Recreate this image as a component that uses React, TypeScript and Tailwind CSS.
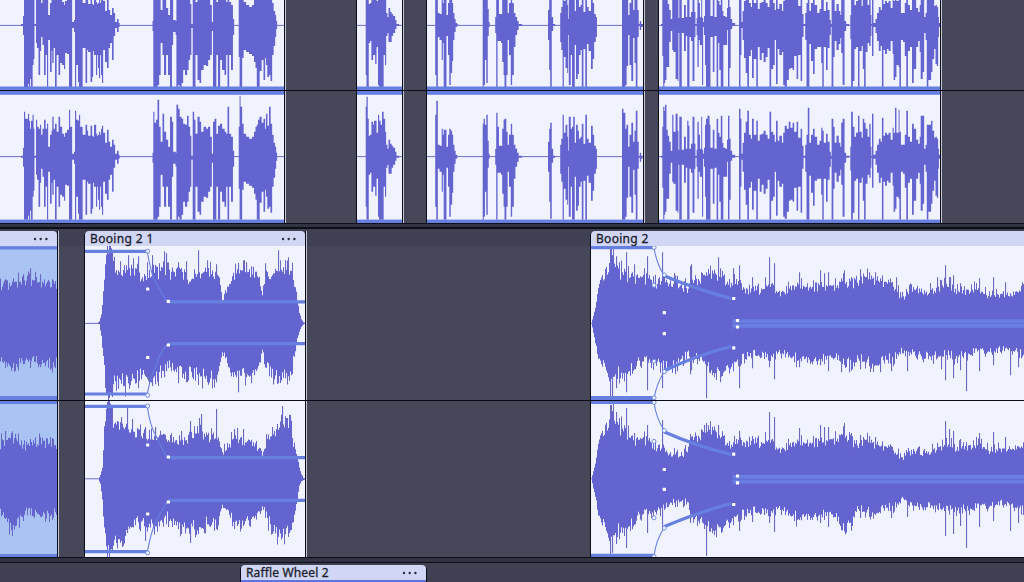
import React from 'react';

type Peak = [number, number, number];

// Peaks are [x, up, down]; in speech clips each value holds until the next x
const speechA: Peak[] = [
  [21, 1, 1], [23, 9, 10], [24, 45, 63], [25, 38, 63], [28, 43, 59], [29, 36, 63], [30, 28, 54], [31, 36, 63], [32.5, 42, 40], [33.5, 28, 34], [34.3, 1, 1],
  [36, 37, 18], [37, 30, 23], [38.5, 28, 50], [40, 32, 26], [41, 22, 12], [42.5, 28, 20], [44, 37, 50], [45.5, 28, 30], [47, 33, 63], [48, 10, 15], [50, 22, 47],
  [51.5, 26, 26], [52.3, 40, 38], [53.5, 28, 23], [55, 33, 63], [56.5, 25, 30], [58.5, 40, 50], [60, 30, 38], [62, 23, 40], [64, 20, 44], [65, 24, 28], [67, 27, 29],
  [69, 47, 63], [70, 30, 63], [72, 3, 3], [74, 5, 7], [75, 46, 63], [76, 37, 40], [78, 36, 57], [79, 42, 63], [80, 30, 63], [82.5, 22, 23], [85.5, 32, 58],
  [87, 26, 25], [88, 21, 27], [90.5, 31, 57], [92, 21, 52], [93, 20, 26], [94, 32, 30], [96, 23, 50], [97, 21, 30], [98, 22, 43], [99, 25, 53], [100, 22, 30], [101, 28, 50], [102, 31, 58], [103, 24, 25],
  [105, 14, 37], [107, 27, 43], [108.5, 15, 23], [110, 10, 18], [112, 17, 35], [113.5, 12, 11], [115, 3, 3], [117, 6, 7], [118.5, 2, 2], [119.5, 0, 0],
  [152.5, 4, 6], [153.3, 45, 63], [154.3, 34, 63], [156, 37, 63], [157.5, 57, 60], [159, 30, 50], [160.5, 15, 18], [162.5, 43, 30], [164, 25, 50], [166, 17, 30],
  [168, 10, 50], [170, 40, 63], [171.8, 35, 20], [173, 5, 7], [175.6, 4, 10], [176.4, 52, 63], [178, 48, 60], [179.5, 40, 63], [181.5, 38, 58], [183, 33, 45],
  [185, 32, 50], [187, 41, 45], [188.5, 30, 35], [190, 21, 30], [191.2, 1, 3], [192.7, 45, 63], [194, 37, 63], [195.3, 23, 30], [197.5, 40, 55], [199.5, 35, 58],
  [201, 25, 45], [203.5, 30, 40], [206, 28, 41], [208, 30, 35], [210, 20, 30], [211.7, 3, 6], [213, 35, 63], [214.5, 38, 63], [216.2, 23, 30], [218, 31, 63],
  [220, 33, 35], [222, 28, 45], [224.5, 25, 50], [226, 23, 30], [227.5, 50, 63], [229, 23, 30], [231, 20, 45], [232.8, 6, 10], [234, 0, 0],
  [238.7, 30, 32], [239.6, 61, 63], [240.4, 50, 63], [242, 33, 33], [243.5, 23, 25], [246, 20, 27], [249, 18, 29], [252, 20, 31], [254, 25, 37], [255.5, 30, 43],
  [256.8, 32, 63], [258, 37, 63], [259.5, 40, 46], [261.5, 34, 35], [263.5, 38, 55], [265, 28, 33], [266, 43, 40], [267.3, 31, 52], [269, 50, 50], [270.5, 33, 56],
  [272, 22, 30], [273.5, 14, 21], [275, 10, 12], [276, 4, 4], [277, 0, 0],
];

const speechB: Peak[] = [
  [365.7, 50, 50], [366.5, 60, 63], [367.6, 38, 63], [368.6, 21, 18], [370, 22, 16], [371.4, 35, 35], [373, 32, 30], [374, 36, 30], [375.2, 36, 39], [376.4, 24, 22],
  [378, 42, 60], [379, 36, 63], [380.5, 32, 63], [382, 45, 63], [383.5, 38, 30], [385, 25, 40], [386, 12, 11], [387.3, 8, 8], [388.5, 17, 17], [390, 13, 17],
  [391.5, 11, 11], [393, 9, 8], [395, 5, 4], [396.3, 1, 1], [399, 0, 0],
];

const speechC: Peak[] = [
  [435.2, 42, 50], [436.3, 56, 63], [437.7, 12, 12], [439.5, 11, 15], [441.7, 28, 35], [442.7, 22, 18], [443.7, 27, 63], [446.3, 10, 11], [448, 22, 30], [449.3, 28, 60],
  [450.6, 26, 48], [452, 22, 36], [453, 12, 15], [454.3, 6, 7], [455.5, 2, 2], [457, 1, 0], [458, 0, 0], [482.7, 33, 63], [483.6, 38, 60], [484.8, 32, 35],
  [486.3, 42, 58], [487.6, 16, 11], [488.6, 3, 2], [489.5, 0, 0], [495.2, 8, 8], [496.2, 44, 63], [497.4, 30, 16], [498.8, 11, 16], [501, 11, 18], [502.2, 28, 37],
  [503.6, 37, 50], [504.5, 38, 63], [506.2, 25, 50], [507.5, 12, 15], [509, 22, 30], [510.8, 33, 60], [512, 22, 50], [513.7, 12, 22], [515.3, 8, 10], [517, 4, 5],
  [518.5, 1, 1], [522, 0, 0], [548, 15, 15], [549.2, 28, 45], [550.2, 34, 62], [551.6, 8, 6], [553, 1, 1], [555, 0, 0], [560.2, 12, 17], [561.3, 18, 25],
  [562.6, 42, 63], [563.7, 24, 32], [565.5, 32, 43], [567.2, 20, 48], [568, 6, 10], [568.8, 40, 60], [570.6, 28, 30], [572, 30, 63], [573.2, 40, 63], [574.6, 14, 20],
  [576, 32, 54], [577.6, 26, 49], [578.8, 18, 30], [580.5, 20, 25], [581.8, 33, 63], [583.3, 13, 24], [585.3, 42, 63], [586.8, 18, 19], [588.5, 14, 26], [591, 31, 44],
  [592.6, 22, 34], [594, 11, 17], [595.7, 8, 12], [596.8, 0, 0], [622, 48, 63], [623.3, 44, 63], [625.2, 28, 60], [626.5, 32, 41], [628, 10, 10], [629.5, 22, 40],
  [631.3, 34, 56], [633, 15, 13], [634.5, 26, 38], [635.8, 46, 63], [637.3, 15, 12], [638.6, 1, 1], [639.8, 4, 5], [641, 1, 2], [642.5, 1, 0], [643, 0, 0],
];

const speechD: Peak[] = [
  [661, 1, 1], [662.3, 30, 31], [663.2, 50, 63], [664.2, 46, 58], [665, 52, 55], [666.3, 27, 42], [667.6, 21, 42], [669, 15, 17], [670.6, 6, 6],
  [672.2, 42, 25], [673.3, 25, 27], [675.6, 43, 54], [677.5, 26, 56], [678.3, 7, 8], [679.3, 40, 63], [681.6, 7, 8], [684, 20, 26], [685.7, 8, 11], [687.2, 36, 63],
  [688.3, 31, 63], [689.3, 8, 12], [691, 13, 16], [692.5, 40, 56], [694.3, 13, 12], [695.3, 1, 1], [696.6, 7, 10], [697.4, 35, 42], [698.6, 22, 15], [699.8, 8, 20],
  [701.2, 40, 20], [702, 7, 60], [703, 3, 2], [704, 9, 10], [705, 32, 40], [706, 38, 63], [707.5, 41, 63], [709.4, 32, 63], [710.3, 9, 12], [712.8, 27, 47],
  [714.3, 8, 11], [716.6, 38, 63], [718, 24, 18], [719.3, 20, 45], [720.8, 41, 63], [722.2, 14, 63], [723.2, 9, 20], [725.3, 8, 20], [727, 17, 5], [728, 41, 63],
  [729.3, 18, 43], [730.5, 6, 4], [732, 2, 1], [735, 0, 0], [739, 48, 63], [740.3, 38, 30], [741.3, 3, 3],
  [742.6, 14, 15], [744, 24, 33], [745.7, 35, 48], [747.3, 46, 63], [748.8, 22, 31], [750.7, 18, 25], [752, 38, 53], [753.6, 22, 34], [756.3, 36, 63], [757.7, 16, 22],
  [759.7, 22, 35], [761.5, 23, 28], [763.6, 26, 37], [765.5, 22, 32], [767.5, 18, 23], [769.5, 45, 63], [771, 25, 44], [773, 22, 40], [774.6, 15, 15], [776, 36, 59],
  [777.5, 16, 24], [779.3, 21, 30], [781.8, 14, 27], [783.2, 24, 60], [784.7, 31, 62], [786.7, 28, 55], [788.7, 35, 44], [790.3, 29, 43], [792.6, 34, 45],
  [794, 25, 31], [796.6, 35, 54], [798, 19, 30], [800.6, 28, 56], [802, 11, 12], [803.4, 1, 1], [805.2, 12, 15], [806.5, 22, 63], [807.8, 49, 63], [809.2, 14, 19],
  [811, 22, 36], [813, 28, 49], [814.5, 20, 24], [817, 12, 22], [819.5, 16, 22], [821.2, 29, 38], [822.3, 26, 63], [823.6, 14, 22], [826, 23, 45], [827.5, 15, 23],
  [829.5, 5, 10], [830.7, 1, 2], [831.6, 38, 63], [833.2, 30, 32], [834.5, 14, 16], [836.5, 21, 25], [838.6, 14, 19], [840.2, 10, 13], [841.2, 34, 28], [842.6, 38, 60],
  [844.4, 4, 6], [846, 1, 1], [849, 0, 0], [850.3, 10, 14], [851.1, 45, 63], [852.7, 30, 56], [854.3, 20, 24], [856, 24, 22], [858, 41, 63], [859.3, 25, 26],
  [861.5, 19, 21], [862.8, 38, 44], [864.1, 34, 63], [865.5, 28, 27], [867.4, 20, 18], [869.3, 33, 21], [870.5, 10, 11], [871.3, 1, 1], [872, 43, 31], [873.3, 2, 2],
  [875.5, 6, 8], [877, 12, 16], [878.8, 18, 26], [880.5, 15, 21], [881.9, 39, 63], [883.3, 21, 25], [885, 24, 29], [886.8, 22, 24], [888.5, 24, 26], [890.5, 17, 16],
  [892.6, 29, 29], [893.6, 24, 55], [895, 49, 52], [896.3, 24, 40], [898.6, 47, 42], [899.4, 25, 63], [900.8, 12, 15], [903, 12, 17], [904.8, 22, 31], [906.3, 46, 63],
  [907.8, 20, 26], [909.8, 15, 22], [912, 33, 58], [913.6, 28, 44], [916, 17, 22], [918, 13, 16], [919.7, 20, 27], [920.7, 41, 54], [922.6, 41, 47], [924, 8, 8],
  [925.6, 12, 15], [926.8, 32, 63], [928.2, 32, 55], [931, 36, 47], [932.3, 26, 34], [934, 19, 24], [935.5, 20, 39], [936.8, 18, 41], [938, 8, 12], [938.8, 2, 2], [940, 1, 1],
];

// Crowd clips: interpolated body outline plus individual spikes
const crowdLeft1: Peak[] = [[0, 33, 30], [7, 35, 35], [11, 36, 41], [20, 38, 36], [30, 38, 34], [40, 37, 35], [57, 37, 36]];
const crowdLeft2: Peak[] = [[0, 32, 31], [5, 36, 34], [12, 38, 44], [17, 37, 42], [25, 30, 30], [35, 34, 31], [57, 32, 31]];

const booingA1: Peak[] = [
  [97, 0, 0], [99, 2, 1], [101, 9, 12], [103, 28, 30], [105, 52, 50], [107, 68, 65], [111, 63, 66], [114, 52, 54], [119, 45, 54], [128, 48, 53], [134, 50, 53], [140, 44, 46],
  [148, 44, 46], [152, 50, 54], [158, 47, 46], [163, 50, 40], [170, 46, 38], [180, 46, 43], [190, 41, 46], [200, 47, 47], [212, 44, 49], [218, 42, 48],
  [222, 23, 30], [226, 30, 29], [230, 42, 42], [236, 49, 47], [244, 46, 47], [252, 48, 48], [258, 42, 38], [262, 25, 25], [266, 46, 40], [275, 46, 48],
  [284, 52, 49], [291, 49, 45], [296, 28, 19], [299, 10, 8], [301, 4, 3], [303, 1, 1], [305, 0, 0],
];
const booingA2: Peak[] = [
  [98, 0, 0], [100, 4, 5], [102, 12, 18], [104, 42, 46], [107, 68, 66], [111, 67, 68], [114, 48, 54], [120, 46, 56], [128, 44, 48], [134, 44, 36], [140, 39, 41],
  [150, 41, 43], [155, 38, 44], [164, 36, 33], [172, 34, 35], [182, 36, 43], [192, 39, 44], [200, 44, 44], [208, 36, 38], [217, 37, 42],
  [221, 25, 26], [226, 27, 29], [232, 37, 37], [243, 36, 39], [252, 34, 37], [258, 29, 30], [262, 24, 24], [268, 34, 38], [274, 44, 49],
  [282, 50, 47], [290, 55, 47], [293, 34, 36], [297, 21, 19], [299, 11, 6], [301, 5, 2], [303, 1, 1], [305, 0, 0],
];
const booingB1: Peak[] = [
  [591, 0, 0], [593, 7, 9], [595, 14, 18], [597, 26, 27], [600, 36, 35], [605, 44, 40], [608, 54, 44], [611, 62, 48], [616, 57, 46], [620, 46, 45], [626, 42, 44],
  [633, 41, 40], [640, 40, 33], [650, 39, 33], [657, 37, 34], [665, 41, 40], [672, 37, 40], [680, 36, 34], [687, 31, 29], [693, 38, 29], [702, 43, 34], [711, 45, 42],
  [724, 41, 42], [733, 37, 38], [739, 34, 33], [746, 31, 29], [757, 30, 28], [768, 34, 32], [778, 28, 29], [787, 30, 27], [800, 35, 34], [811, 33, 34],
  [822, 34, 32], [832, 33, 29], [842, 38, 34], [851, 38, 38], [856, 37, 32], [866, 40, 34], [874, 40, 37], [886, 37, 33], [895, 31, 30], [903, 23, 23],
  [911, 32, 27], [923, 28, 31], [935, 31, 29], [946, 35, 28], [957, 29, 31], [970, 31, 27], [982, 28, 24], [991, 24, 26], [1001, 26, 23], [1010, 24, 24], [1024, 31, 29],
];
const booingB2: Peak[] = [
  [591, 0, 0], [593, 7, 9], [595, 14, 16], [597, 26, 27], [600, 36, 37], [605, 44, 44], [608, 54, 48], [611, 60, 50], [616, 56, 49], [620, 46, 44], [626, 41, 43],
  [633, 34, 40], [640, 35, 31], [650, 33, 29], [657, 29, 28], [665, 27, 26], [671, 23, 21], [680, 22, 21], [686, 25, 21], [690, 35, 29], [700, 41, 39], [711, 45, 44],
  [722, 38, 42], [731, 32, 38], [740, 32, 32], [746, 34, 30], [757, 33, 29], [768, 34, 32], [778, 27, 29], [787, 29, 29], [800, 34, 37], [811, 33, 34],
  [822, 34, 32], [832, 35, 30], [842, 40, 43], [850, 40, 45], [855, 30, 27], [866, 34, 29], [874, 32, 30], [886, 29, 26], [895, 24, 24], [903, 20, 18],
  [911, 26, 23], [923, 23, 25], [935, 27, 24], [946, 31, 28], [957, 28, 27], [970, 31, 27], [982, 29, 24], [991, 25, 24], [1001, 27, 21], [1010, 26, 24], [1024, 29, 29],
];

const spikesLeft1: Peak[] = [[5, 44, 30], [23, 49, 41], [30, 55, 43], [40, 49, 44], [52, 44, 45]];
const spikesLeft2: Peak[] = [[5, 48, 40], [11, 46, 51], [15, 45, 47], [39, 43, 36], [50, 42, 37]];
const spikesA1: Peak[] = [
  [107, 71, 69], [112, 72, 68], [120, 62, 50], [128, 68, 60], [138, 67, 54], [152, 68, 63], [164, 72, 54], [166, 70, 48], [178, 61, 60], [186, 62, 59],
  [198, 73, 50], [207, 63, 59], [216, 59, 59], [238, 58, 69], [246, 61, 54], [251, 57, 60], [265, 60, 40], [273, 50, 61], [278, 73, 60], [285, 63, 55],
];
const spikesA2: Peak[] = [
  [107, 77, 72], [121, 62, 62], [127, 71, 54], [132, 60, 48], [145, 52, 62], [155, 52, 47], [168, 39, 48], [181, 48, 55], [190, 58, 64], [199, 61, 48],
  [201, 65, 47], [216, 70, 50], [234, 50, 50], [237, 51, 47], [243, 50, 47], [266, 45, 32], [272, 52, 55], [282, 73, 48], [289, 64, 54],
];
const spikesB1: Peak[] = [
  [610, 75, 77], [612, 68, 74], [616, 67, 65], [626, 71, 69], [634, 59, 43], [647, 67, 67], [653, 47, 38], [662, 71, 65], [675, 48, 50], [690, 57, 51], [691, 59, 47],
  [706, 51, 75], [718, 66, 44], [720, 55, 59], [733, 55, 42], [739, 58, 65], [752, 46, 45], [769, 66, 44], [774, 60, 56], [799, 51, 44], [820, 53, 42],
  [824, 50, 32], [828, 51, 48], [841, 45, 49], [849, 43, 49], [860, 54, 46], [869, 51, 43], [875, 51, 42], [880, 45, 49], [891, 36, 48], [896, 46, 31],
  [907, 31, 48], [937, 46, 35], [941, 43, 46], [945, 58, 57], [950, 46, 35], [953, 48, 55], [960, 40, 47], [966, 31, 68], [979, 45, 48], [993, 46, 42],
  [1005, 41, 25], [1010, 30, 52], [1018, 29, 44],
];
const spikesB2: Peak[] = [
  [610, 74, 76], [612, 68, 74], [616, 67, 65], [626, 71, 69], [634, 46, 43], [647, 54, 54], [662, 59, 50], [690, 45, 44], [704, 54, 50],
  [706, 56, 77], [718, 54, 44], [739, 48, 52], [752, 43, 43], [769, 67, 44], [774, 62, 53], [799, 51, 41], [820, 54, 44],
  [824, 52, 32], [828, 52, 48], [841, 45, 51], [860, 44, 39], [869, 43, 38], [875, 42, 36], [891, 33, 39],
  [907, 26, 38], [937, 36, 30], [945, 58, 57], [949, 50, 32], [953, 48, 55], [960, 40, 47], [966, 31, 69], [979, 46, 48], [993, 47, 42],
  [1005, 42, 25], [1010, 30, 52], [1018, 29, 44],
];

const WAVE = '#6464d0';
const ENV = '#6780e0';

function Speech({ peaks, cy, maxDown }: { peaks: Peak[]; cy: number; maxDown: number }) {
  let d = '';
  for (let i = 0; i < peaks.length - 1; i++) {
    const [x, up, down] = peaks[i];
    if (up + down === 0) continue;
    d += `M${x} ${cy - up}H${peaks[i + 1][0] + 0.15}V${cy + Math.min(down, maxDown)}H${x}Z`;
  }
  return <path d={d} fill={WAVE} />;
}

function Crowd({ outline, spikes, cy, seed }: { outline: Peak[]; spikes: Peak[]; cy: number; seed: number }) {
  let s = seed;
  const rnd = () => {
    s = (s * 16807) % 2147483647;
    return s / 2147483647;
  };
  let body = '';
  let thin = '';
  let k = 0;
  const end = outline[outline.length - 1][0];
  for (let x = outline[0][0]; x < end; x += 1) {
    while (k < outline.length - 2 && x >= outline[k + 1][0]) k++;
    const a = outline[k];
    const b = outline[k + 1];
    const t = (x - a[0]) / (b[0] - a[0]);
    const up = a[1] + (b[1] - a[1]) * t;
    const down = a[2] + (b[2] - a[2]) * t;
    const u = up * (0.93 + rnd() * 0.22);
    const v = down * (0.93 + rnd() * 0.24);
    body += `M${x} ${cy - u}h1.05V${cy + v}h-1.05Z`;
    if (up > 20 && rnd() > 0.6) body += `M${x} ${cy - up * (1.06 + rnd() * 0.2)}h1V${cy}h-1Z`;
    if (down > 20 && rnd() > 0.6) body += `M${x} ${cy}h1V${cy + down * (1.06 + rnd() * 0.22)}h-1Z`;
    if (up > 20 && rnd() > 0.86) thin += `M${x} ${cy - up * (1.15 + rnd() * 0.25)}h1V${cy}h-1Z`;
    if (down > 20 && rnd() > 0.86) thin += `M${x} ${cy}h1V${cy + down * (1.15 + rnd() * 0.25)}h-1Z`;
  }
  for (const [x, up, down] of spikes) thin += `M${x} ${cy - up}h1.1V${cy + down}h-1.1Z`;
  return (
    <>
      <path d={thin} fill="#6b68c0" />
      <path d={body} fill={WAVE} />
    </>
  );
}

function Dots() {
  return (
    <svg width="16" height="4" viewBox="0 0 16 4" fill="#2b2d40">
      <circle cx="2" cy="2" r="1.2" />
      <circle cx="7.7" cy="2" r="1.2" />
      <circle cx="13.4" cy="2" r="1.2" />
    </svg>
  );
}

function Handles({ squares, circles }: { squares: number[][]; circles: number[][] }) {
  return (
    <>
      {squares.map(([x, y]) => (
        <rect key={`${x}-${y}`} x={x - 1.6} y={y - 1.6} width="3.2" height="3.2" rx="0.5" fill="#fff" />
      ))}
      {circles.map(([x, y]) => (
        <circle key={`${x}-${y}`} cx={x} cy={y} r="2" fill="#f4f6ff" stroke={ENV} strokeWidth="0.9" />
      ))}
    </>
  );
}

function SpeechClip({ x, width, peaks, className }: { x: number; width: number; peaks: Peak[]; className: string }) {
  return (
    <div className={`h-[223px] shrink-0 bg-[#f0f2fe] ${className}`}>
      <svg className="block" width={width} height="223" viewBox={`${x} 0 ${width} 223`}>
        <path d={`M${x} 25.4H${x + width}M${x} 156.6H${x + width}`} stroke="#6e6fc4" strokeWidth="1" />
        <Speech peaks={peaks} cy={25} maxDown={62} />
        <Speech peaks={peaks} cy={156.7} maxDown={63} />
        <rect x={x} y="86.5" width={width} height="8.3" fill={ENV} />
        <rect x={x} y="219.6" width={width} height="3.4" fill={ENV} />
      </svg>
    </div>
  );
}

function ClipHeader({ title, dots, className }: { title?: string; dots?: boolean; className: string }) {
  return (
    <div className={`flex h-[15px] items-center justify-between bg-[#d0d6f4] pr-2 pl-[5px] ${className}`}>
      <span className="text-[12px] leading-[15px] whitespace-nowrap text-[#1d1e2c] [-webkit-text-stroke:0.3px_#1d1e2c]">{title}</span>
      {dots && <Dots />}
    </div>
  );
}

// Black trim line with its light highlight on the right of a clip
function Edge() {
  return <div className="w-[2px] shrink-0 border-r border-l border-r-[#c3c5d2] border-l-[#0c0d18]" />;
}

export default function App() {
  return (
    <div className="flex h-[582px] w-[1024px] flex-col overflow-hidden bg-[#464859] font-['Noto_Sans','Open_Sans',sans-serif]">
      {/* Speech track */}
      <div className="relative flex h-[223px] shrink-0">
        <SpeechClip x={0} width={284} peaks={speechA} className="w-[284px]" />
        <Edge />
        <SpeechClip x={357} width={45} peaks={speechB} className="ml-[70px] w-[46px] border-l border-[#0c0d18]" />
        <Edge />
        <SpeechClip x={427} width={216} peaks={speechC} className="ml-[22px] w-[217px] border-l border-[#0c0d18]" />
        <Edge />
        <SpeechClip x={659} width={281} peaks={speechD} className="ml-[13px] w-[282px] border-l border-[#0c0d18]" />
        <Edge />
        <div className="absolute inset-x-0 top-[90px] h-px bg-[#0a0b16]" />
      </div>

      <div className="h-[6px] shrink-0 border-t border-b-2 border-[#0d0e19] bg-[#323342]" />

      {/* Crowd track */}
      <div className="relative flex h-[328px] shrink-0 bg-[linear-gradient(#3f4152_0_17px,#464859_17px)] pt-[2px]">
        <div className="w-[57px] shrink-0">
          <ClipHeader dots className="rounded-tr-[4px]" />
          <svg className="block bg-[#a9c3f3]" width="57" height="311" viewBox="0 246 57 311">
            <Crowd outline={crowdLeft1} spikes={spikesLeft1} cy={323.3} seed={41} />
            <Crowd outline={crowdLeft2} spikes={spikesLeft2} cy={479} seed={77} />
            <path d="M0 247.8H57M0 555.6H57" stroke={ENV} strokeWidth="3.2" />
            <path d="M0 400H57" stroke={ENV} strokeWidth="8" />
          </svg>
        </div>
        <Edge />

        <div className="ml-[25px] w-[221px] shrink-0 rounded-t-[5px] border-l border-[#0c0d18]">
          <ClipHeader title="Booing 2 1" dots className="rounded-t-[4px] tracking-[0.35px]" />
          <svg className="block bg-[#f0f2fe]" width="220" height="311" viewBox="85 246 220 311" fill="none">
            <path d="M85 323.4H305M85 478.8H305" stroke="#6e6fc4" strokeWidth="1" />
            <Crowd outline={booingA1} spikes={spikesA1} cy={323.3} seed={1234} />
            <Crowd outline={booingA2} spikes={spikesA2} cy={479} seed={982} />
            <path
              d="M85 251.4H147M85 394H147M85 406.4H147M85 551.6H147M168 301.8H305M168 343.6H305M168 457.6H305M168 500.4H305"
              stroke={ENV}
              strokeWidth="3.2"
            />
            <path
              d="M147.5 253Q152 277 155 281L166 300.5M147.5 393Q151 375 155 368Q160 352 167 345M147.5 408Q150 424 154 432L166 456M147.5 551Q151 532 156 521L167 502"
              stroke={ENV}
              strokeWidth="1.1"
            />
            <Handles
              squares={[[147.7, 289], [147.7, 357.5], [168.3, 301.3], [168.3, 345], [147.7, 445], [147.7, 514], [168.3, 457], [168.3, 502]]}
              circles={[[147.7, 251.2], [147.7, 395.3], [147.7, 406], [147.7, 552.8]]}
            />
          </svg>
        </div>
        <Edge />

        <div className="ml-[283px] w-[434px] shrink-0 rounded-tl-[5px] border-l border-[#0c0d18]">
          <ClipHeader title="Booing 2" className="rounded-tl-[4px] tracking-[0.3px]" />
          <svg className="block bg-[#f0f2fe]" width="433" height="311" viewBox="591 246 433 311" fill="none">
            <path d="M591 323.4H1024M591 478.8H1024" stroke="#6e6fc4" strokeWidth="1" />
            <Crowd outline={booingB1} spikes={spikesB1} cy={323.3} seed={5501} />
            <Crowd outline={booingB2} spikes={spikesB2} cy={479} seed={5501} />
            <path d="M591 247.7H654M591 555.4H654" stroke={ENV} strokeWidth="3.2" />
            <path d="M591 400H654" stroke={ENV} strokeWidth="8" />
            <path
              d="M664.5 276Q696 289 731 298.5M664.5 370.5Q700 354 731 346.5M664.5 432Q696 446 731 454.5M664.5 526.5Q696 513 731 503.5"
              stroke={ENV}
              strokeWidth="3.2"
            />
            <path
              d="M654 248Q657 265 664 275M654 399Q656 385 664 372M654 402Q656 418 664 430M654 556Q656 540 664 528"
              stroke={ENV}
              strokeWidth="1.1"
            />
            <path d="M733 323.5H1024M733 479.3H1024" stroke="#6a7ee2" strokeWidth="8.4" />
            <path d="M733 323.5H1024M733 479.3H1024" stroke="#6270d6" strokeWidth="1.2" />
            <path d="M732.5 316V331M732.5 472V487" stroke="#6a72dc" strokeWidth="0.8" />
            <Handles
              squares={[
                [664.3, 312.7], [664.3, 333.6], [733.7, 298.5], [733.7, 347.8], [737.5, 320.5], [737.5, 327],
                [664.3, 469.5], [664.3, 489.4], [733.7, 454.2], [733.7, 504.5], [737.5, 476], [737.5, 482.8],
              ]}
              circles={[[654, 247.5], [664.3, 275], [654, 285.2], [654, 361.2], [664.3, 371.6], [654, 397.8], [654, 402.4], [664.3, 430.6], [654, 441.4], [654, 517.8], [664.3, 528], [654, 556.6]]}
            />
          </svg>
        </div>
        <div className="absolute inset-x-0 top-[171px] h-px bg-[#0a0b16]" />
      </div>

      <div className="h-[6px] shrink-0 border-y border-[#0d0e19] bg-[#323342]" />

      {/* Raffle track */}
      <div className="flex h-[19px] shrink-0 bg-[#3f4052] pt-[2px]">
        <div className="ml-[240px] w-[187px] rounded-t-[5px] border-x border-[#0c0d18]">
          <ClipHeader title="Raffle Wheel 2" dots className="rounded-t-[4px] tracking-[0.15px]" />
          <div className="h-[2px] bg-[#5c74dc]" />
        </div>
      </div>
    </div>
  );
}
